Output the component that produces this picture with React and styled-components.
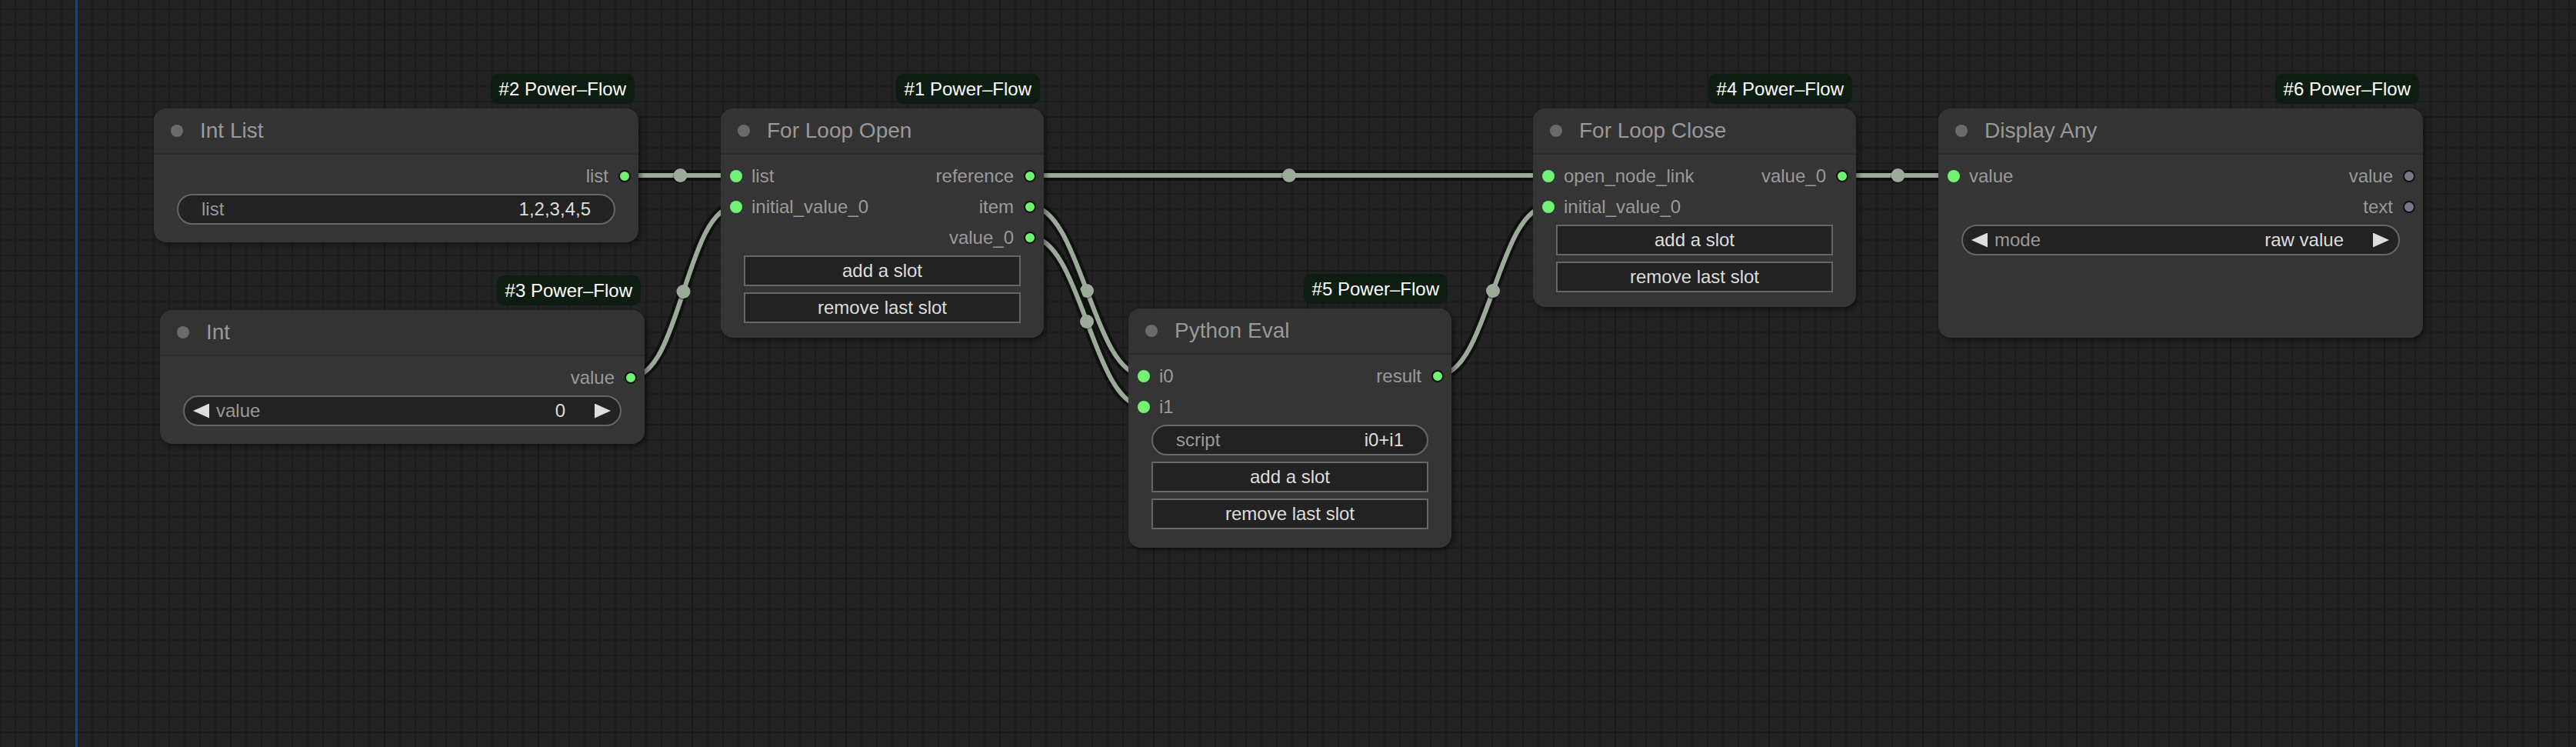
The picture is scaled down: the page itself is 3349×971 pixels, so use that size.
import React from "react";
import styled, { createGlobalStyle } from "styled-components";

const GlobalStyle = createGlobalStyle`
  html, body {
    margin: 0;
    padding: 0;
    background: #222;
    overflow: hidden;
  }
  * {
    box-sizing: border-box;
  }
`;

const TITLE_H = 60;
const ROW_H = 40;

// node placement on the graph canvas
const nodes = {
  intList: {
    id: 2, title: "Int List", x: 200, y: 141, w: 630, h: 174,
    rows: [[null, { label: "list" }]],
    widgets: [{ kind: "text", label: "list", value: "1,2,3,4,5" }],
  },
  int: {
    id: 3, title: "Int", x: 208, y: 403, w: 630, h: 174,
    rows: [[null, { label: "value" }]],
    widgets: [{ kind: "number", label: "value", value: "0" }],
  },
  loopOpen: {
    id: 1, title: "For Loop Open", x: 937, y: 141, w: 420, h: 298,
    rows: [
      [{ label: "list" }, { label: "reference" }],
      [{ label: "initial_value_0" }, { label: "item" }],
      [null, { label: "value_0" }],
    ],
    widgets: [{ kind: "button", label: "add a slot" }, { kind: "button", label: "remove last slot" }],
  },
  pyEval: {
    id: 5, title: "Python Eval", x: 1467, y: 401, w: 420, h: 311,
    rows: [
      [{ label: "i0" }, { label: "result" }],
      [{ label: "i1" }, null],
    ],
    widgets: [
      { kind: "text", label: "script", value: "i0+i1" },
      { kind: "button", label: "add a slot" },
      { kind: "button", label: "remove last slot" },
    ],
  },
  loopClose: {
    id: 4, title: "For Loop Close", x: 1993, y: 141, w: 420, h: 258,
    rows: [
      [{ label: "open_node_link" }, { label: "value_0" }],
      [{ label: "initial_value_0" }, null],
    ],
    widgets: [{ kind: "button", label: "add a slot" }, { kind: "button", label: "remove last slot" }],
  },
  display: {
    id: 6, title: "Display Any", x: 2520, y: 141, w: 630, h: 298,
    rows: [
      [{ label: "value" }, { label: "value", idle: true }],
      [null, { label: "text", idle: true }],
    ],
    widgets: [{ kind: "combo", label: "mode", value: "raw value" }],
  },
};

const links = [
  ["intList", 0, "loopOpen", 0],
  ["int", 0, "loopOpen", 1],
  ["loopOpen", 0, "loopClose", 0],
  ["loopOpen", 1, "pyEval", 0],
  ["loopOpen", 2, "pyEval", 1],
  ["pyEval", 0, "loopClose", 1],
  ["loopClose", 0, "display", 0],
];

const slotY = (n, i) => n.y + TITLE_H + 27 + i * ROW_H;
const outPos = (n, i) => [n.x + n.w - 18, slotY(n, i)];
const inPos = (n, i) => [n.x + 20, slotY(n, i)];

const Canvas = styled.div`
  position: relative;
  width: 100vw;
  height: 100vh;
  overflow: hidden;
  font-family: "Liberation Sans", Arial, sans-serif;
  background-color: #222;
  background-image:
    linear-gradient(to right, #2a3f6c 3px, transparent 3px),
    linear-gradient(to right, #191919 2px, transparent 2px),
    linear-gradient(to bottom, #191919 2px, transparent 2px),
    linear-gradient(to right, #1c1c1c 2px, transparent 2px),
    linear-gradient(to bottom, #1c1c1c 2px, transparent 2px);
  background-size: 100% 100%, 200px 100%, 100% 200px, 20px 100%, 100% 20px;
  background-position: 98px 0, 99px 0, 0 151px, -1px 0, 0 11px;
  background-repeat: no-repeat, repeat, repeat, repeat, repeat;
`;

const LinkLayer = styled.svg`
  position: absolute;
  inset: 0;
  width: 100%;
  height: 100%;
`;

const NodeBox = styled.div`
  position: absolute;
  left: ${(p) => p.$x}px;
  top: ${(p) => p.$y}px;
  width: ${(p) => p.$w}px;
  height: ${(p) => p.$h}px;
  display: flex;
  flex-direction: column;
  background: #353535;
  border-radius: 16px;
  box-shadow: 3px 3px 6px rgba(0, 0, 0, 0.45);
`;

const Badge = styled.div`
  position: absolute;
  right: 5px;
  bottom: calc(100% + 6px);
  height: 39px;
  padding: 0 11px;
  display: flex;
  align-items: center;
  background: #0e1d11;
  border-radius: 10px;
  color: #fff;
  font-size: 24px;
  white-space: nowrap;
`;

const TitleBar = styled.div`
  height: ${TITLE_H}px;
  flex: none;
  display: flex;
  align-items: center;
  gap: 22px;
  padding-left: 22px;
  background: #333;
  border-radius: 16px 16px 0 0;
  border-bottom: 2px solid #2b2b2b;
  color: #999;
  font-size: 28px;
`;

const TitleDot = styled.span`
  width: 16px;
  height: 16px;
  border-radius: 50%;
  background: #6b6b6b;
`;

const Body = styled.div`
  display: flex;
  flex-direction: column;
  padding-top: 8px;
`;

const SlotRow = styled.div`
  height: ${ROW_H}px;
  display: flex;
  align-items: center;
  justify-content: space-between;
  padding: 0 10px 0 12px;
  color: #9a9a9a;
  font-size: 24px;
`;

const Slot = styled.div`
  display: flex;
  align-items: center;
  gap: ${(p) => (p.$out ? 13 : 12)}px;
`;

const Dot = styled.span`
  width: 16px;
  height: 16px;
  border-radius: 50%;
  background: ${(p) => (p.$idle ? "#787888" : "#72f272")};
  border: ${(p) => (p.$out ? "2px solid #111" : "none")};
`;

const Widgets = styled.div`
  display: flex;
  flex-direction: column;
  gap: 8px;
  margin-top: 3px;
  padding: 0 30px;
`;

const Field = styled.div`
  height: 40px;
  display: flex;
  align-items: center;
  justify-content: space-between;
  padding: 0 ${(p) => (p.$arrows ? 12 : 30)}px 0 ${(p) => (p.$arrows ? 11 : 30)}px;
  background: #222;
  border: 2px solid #666;
  border-radius: 20px;
  font-size: 24px;
`;

const FieldSide = styled.div`
  display: flex;
  align-items: center;
  gap: ${(p) => p.$gap || 0}px;
`;

const Label = styled.span`
  color: #999;
`;

const Value = styled.span`
  color: #ddd;
`;

const Arrow = styled.span`
  width: 21px;
  height: 19px;
  background: #ddd;
  clip-path: ${(p) =>
    p.$right ? "polygon(0 0, 100% 50%, 0 100%)" : "polygon(100% 0, 0 50%, 100% 100%)"};
`;

const Button = styled.div`
  height: 40px;
  display: flex;
  align-items: center;
  justify-content: center;
  background: #222;
  border: 2px solid #666;
  color: #ddd;
  font-size: 24px;
`;

function Widget({ w }) {
  if (w.kind === "button") return <Button>{w.label}</Button>;
  if (w.kind === "text")
    return (
      <Field>
        <Label>{w.label}</Label>
        <Value>{w.value}</Value>
      </Field>
    );
  return (
    <Field $arrows>
      <FieldSide $gap={9}>
        <Arrow />
        <Label>{w.label}</Label>
      </FieldSide>
      <FieldSide $gap={38}>
        <Value>{w.value}</Value>
        <Arrow $right />
      </FieldSide>
    </Field>
  );
}

function Node({ n }) {
  return (
    <NodeBox $x={n.x} $y={n.y} $w={n.w} $h={n.h}>
      <Badge>#{n.id} Power–Flow</Badge>
      <TitleBar>
        <TitleDot />
        {n.title}
      </TitleBar>
      <Body>
        {n.rows.map(([inp, out], i) => (
          <SlotRow key={i}>
            {inp ? (
              <Slot>
                <Dot />
                {inp.label}
              </Slot>
            ) : (
              <span />
            )}
            {out ? (
              <Slot $out>
                {out.label}
                <Dot $out $idle={out.idle} />
              </Slot>
            ) : (
              <span />
            )}
          </SlotRow>
        ))}
        <Widgets>
          {n.widgets.map((w, i) => (
            <Widget key={i} w={w} />
          ))}
        </Widgets>
      </Body>
    </NodeBox>
  );
}

function Link({ from, to }) {
  const [ax, ay] = from;
  const [bx, by] = to;
  const d = Math.hypot(bx - ax, by - ay) * 0.25;
  const path = `M ${ax} ${ay} C ${ax + d} ${ay} ${bx - d} ${by} ${bx} ${by}`;
  const mx = (ax + bx) / 2;
  const my = (ay + by) / 2;
  return (
    <g>
      <path d={path} stroke="#101010" strokeWidth="14" fill="none" />
      <path d={path} stroke="#9aab98" strokeWidth="6" fill="none" />
      <circle cx={mx - 1} cy={my + 2} r="9" fill="rgba(0,0,0,0.35)" />
      <circle cx={mx} cy={my} r="9" fill="#9aab98" />
    </g>
  );
}

export default function App() {
  return (
    <>
      <GlobalStyle />
      <Canvas>
        <LinkLayer>
          {links.map(([a, ai, b, bi], i) => (
            <Link key={i} from={outPos(nodes[a], ai)} to={inPos(nodes[b], bi)} />
          ))}
        </LinkLayer>
        {Object.values(nodes).map((n) => (
          <Node key={n.id} n={n} />
        ))}
      </Canvas>
    </>
  );
}
